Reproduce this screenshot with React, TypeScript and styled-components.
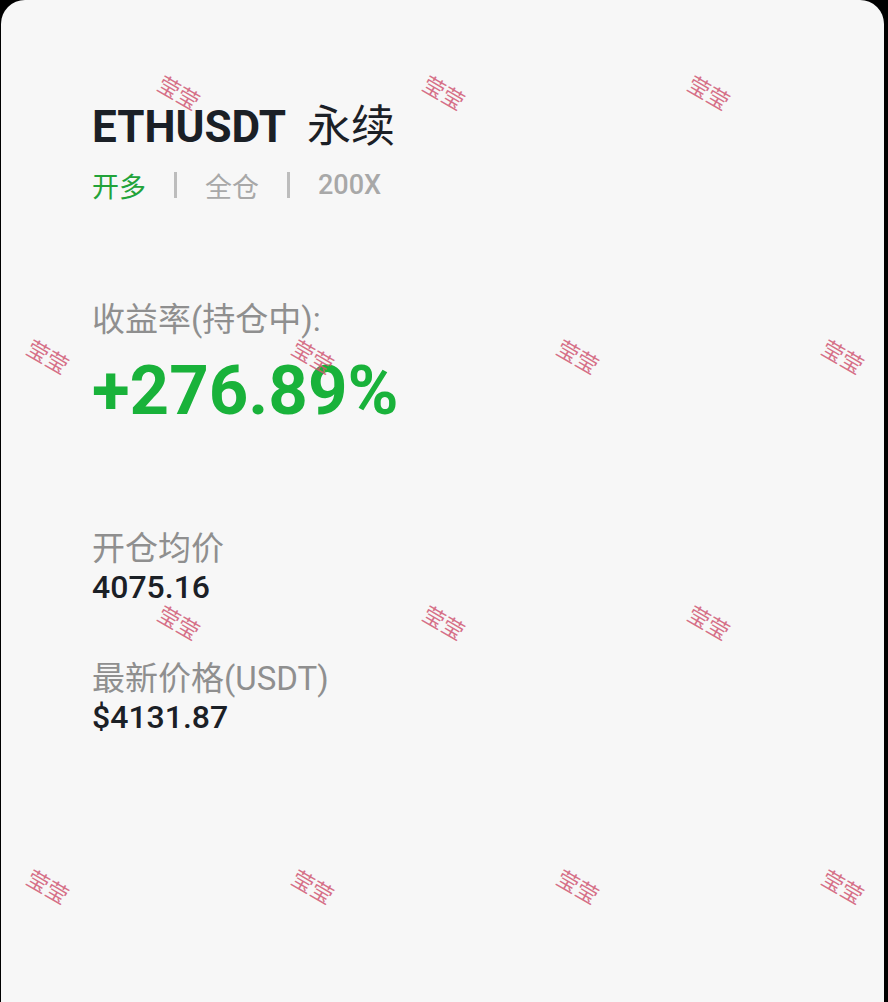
import styled, { createGlobalStyle } from "styled-components";

const GlobalStyle = createGlobalStyle`
  html, body {
    margin: 0;
    padding: 0;
    background: #000;
  }
  body {
    font-family: Roboto, "Noto Sans CJK SC", sans-serif;
  }
`

const Page = styled.div`
  height: 1002px;
  padding: 0 4px 0 1px;
  box-sizing: border-box;
  overflow: hidden;
`

const Card = styled.div`
  position: relative;
  height: 100%;
  background: #f7f7f7;
  border-radius: 24px 24px 0 0;
  padding: 99px 0 0 91px;
  box-sizing: border-box;
  overflow: hidden;
`

const Title = styled.h1`
  margin: 0;
  font-size: 44px;
  line-height: 56px;
  font-weight: 700;
  color: #1b2026;
`

const Suffix = styled.span`
  margin-left: 21px;
  font-size: 44px;
  font-weight: 400;
`

const Tags = styled.div`
  display: flex;
  align-items: center;
  gap: 28px;
  margin-top: 12px;
  height: 36px;
  font-size: 27px;
`

const Tag = styled.span<{ $green?: boolean; $bold?: boolean }>`
  color: ${p => (p.$green ? "#22a33a" : "#a8a8a8")};
  font-weight: ${p => (p.$bold ? 500 : 400)};
`

const Bar = styled.span`
  width: 3px;
  height: 26px;
  background: #bdbdbd;
`

const Label = styled.div<{ $gap: number }>`
  margin-top: ${p => p.$gap}px;
  font-size: 33px;
  line-height: 38px;
  color: #8f8f8f;
`

const Rate = styled.div`
  margin-top: 11px;
  font-size: 69px;
  line-height: 82px;
  font-weight: 700;
  color: #19b23a;
`

const Value = styled.div`
  font-size: 32px;
  line-height: 38px;
  font-weight: 500;
  color: #1b2026;
`

const Watermarks = styled.div`
  position: absolute;
  inset: 0;
  pointer-events: none;
`

const Mark = styled.span`
  position: absolute;
  width: 60px;
  margin-left: -30px;
  margin-top: -15px;
  line-height: 30px;
  text-align: center;
  font-size: 22px;
  color: rgba(208, 88, 116, 0.85);
  transform: rotate(30deg);
  white-space: nowrap;
`

const marks: [number, number][] = [
  [177, 94], [442, 94], [707, 94],
  [46, 358], [311, 358], [576, 358], [841, 358],
  [177, 624], [442, 624], [707, 624],
  [46, 888], [311, 888], [576, 888], [841, 888],
]

export default function App() {
  return (
    <Page>
      <GlobalStyle />
      <Card>
        <Title>ETHUSDT<Suffix>永续</Suffix></Title>
        <Tags>
          <Tag $green>开多</Tag>
          <Bar />
          <Tag>全仓</Tag>
          <Bar />
          <Tag $bold>200X</Tag>
        </Tags>

        <Label $gap={98}>收益率(持仓中):</Label>
        <Rate>+276.89%</Rate>

        <Label $gap={98}>开仓均价</Label>
        <Value>4075.16</Value>

        <Label $gap={54}>最新价格(USDT)</Label>
        <Value>$4131.87</Value>

        <Watermarks>
          {marks.map(([x, y], i) => (
            <Mark key={i} style={{ left: x, top: y }}>莹莹</Mark>
          ))}
        </Watermarks>
      </Card>
    </Page>
  )
}
